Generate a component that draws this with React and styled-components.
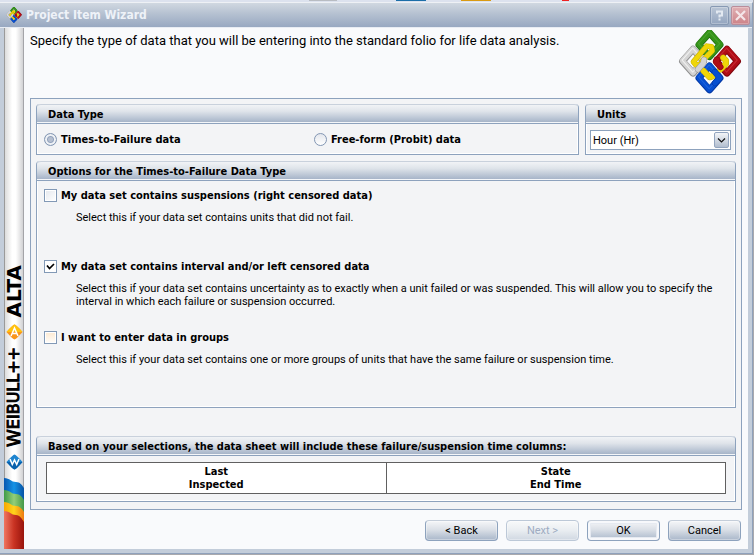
import React, { useState } from "react";
import styled, { createGlobalStyle, css } from "styled-components";

const line = "#8da2bd";
const boldFont = `"DejaVu Sans Condensed", "DejaVu Sans", sans-serif`;

const Global = createGlobalStyle`
  *, *::before, *::after { box-sizing: border-box; }
  body {
    margin: 0;
    background: #dfe6f0;
    color: #000;
    font-family: Roboto, "DejaVu Sans Condensed", sans-serif;
    font-size: 11px;
    line-height: 13px;
  }
  button, select, input { font: inherit; margin: 0; }
`;

const Desktop = styled.div`
  min-height: 100vh;
  display: flex;
  flex-direction: column;
  padding: 0 1px 1px 0;
  background: #a9a9ad;
`;

const Backdrop = styled.div`
  height: 2px;
  background:
    linear-gradient(#1c6ea8, #1c6ea8) 396px 0 / 30px 1px no-repeat,
    linear-gradient(#d99a12, #d99a12) 461px 0 / 30px 1px no-repeat,
    linear-gradient(#e22, #e22) 562px 0 / 7px 1px no-repeat,
    linear-gradient(#b8bcc2, #b8bcc2) 309px 0 / 28px 1px no-repeat,
    #dce2ee;
`;

const Dialog = styled.main`
  flex: 1;
  display: flex;
  flex-direction: column;
  background: #c3cdda;
  border-right: 1px solid #8fa1bb;
  border-bottom: 1px solid #8fa1bb;
  border-top: 1px solid #eef1f5;
`;

const TitleBar = styled.header`
  height: 24px;
  display: flex;
  align-items: center;
  gap: 4px;
  padding: 0 2px 0 6px;
  background: linear-gradient(#d0d8e1, #b5c1d1 45%, #98a8c1);
`;

const Title = styled.h1`
  flex: 1;
  margin: 0;
  color: #eef2f8;
  font-family: ${boldFont};
  font-size: 12px;
  line-height: 16px;
`;

const CaptionButton = styled.button`
  width: 19px;
  height: 19px;
  padding: 0;
  display: grid;
  place-items: center;
  border: 1px solid ${(p) => (p.$close ? "#b98d9b" : "#8799b3")};
  border-radius: 2px;
  background: ${(p) =>
    p.$close
      ? "linear-gradient(#e0b0b4, #cd8389)"
      : "linear-gradient(#b9c5d5, #95a6c0)"};
  box-shadow: inset 0 0 0 1px rgba(255, 255, 255, 0.25);
`;

const CaptionButtons = styled.div`
  display: flex;
  gap: 2px;
`;

const Body = styled.div`
  flex: 1;
  display: flex;
  border-top: 1px solid #e8ecf3;
  padding: 0 4px 4px 4px;
`;

const Sidebar = styled.aside`
  width: 20px;
  flex: none;
  display: flex;
  flex-direction: column;
  justify-content: flex-end;
  align-items: center;
  gap: 7px;
  border-left: 1px solid #9a9a9a;
  border-right: 1px solid #a4a4a8;
  background: linear-gradient(90deg, #dcdcdc, #fff 40%, #fff 60%, #d2d2d4);
`;

const Brand = styled.div`
  writing-mode: vertical-rl;
  transform: rotate(180deg);
  font-family: "DejaVu Sans", sans-serif;
  font-size: ${(p) => (p.$large ? "20px" : "18px")};
  font-weight: ${(p) => (p.$large ? "700" : "400")};
  font-kerning: none;
  line-height: 18px;
  -webkit-text-stroke: ${(p) => (p.$large ? "0" : "1px #000")};
  white-space: nowrap;

  span { font-size: 16px; }
`;

const Ribbon = styled.svg`
  display: block;
  width: 20px;
  height: 72px;
  flex: none;
`;

const Page = styled.div`
  flex: 1;
  min-width: 0;
  padding: 2px 6px 8px;
  background: #f9fafc;
`;

const Intro = styled.div`
  display: flex;
  justify-content: space-between;
  min-height: 68px;
`;

const IntroText = styled.p`
  margin: 0;
  padding-top: 3px;
  font-size: 13px;
  line-height: 16px;
`;

const Frame = styled.section`
  display: flex;
  flex-direction: column;
  gap: 6px;
  padding: 5px 5px 7px;
  border: 1px solid ${line};
  background: #f3f4f6;
`;

const TopRow = styled.div`
  display: flex;
  gap: 6px;
`;

const Group = styled.fieldset`
  min-width: 0;
  margin: 0;
  padding: 0;
  border: 1px solid ${line};
  border-top: 0;
  border-radius: 4px 4px 0 0;
  box-shadow: inset -1px -1px #fff, inset 1px 0 #fff;
  ${(p) => p.$grow && css`flex: 1;`}
  ${(p) => p.$narrow && css`flex: 0 0 151px;`}
  ${(p) => p.$spaced && css`margin-top: 22px;`}
`;

const GroupTitle = styled.h2`
  margin: 0;
  height: 20px;
  padding: 2px 11px 0;
  border-top: 1px solid #c9d1dc;
  border-bottom: 1px solid ${line};
  border-radius: 4px 4px 0 0;
  background: linear-gradient(#f1f3f6, #dfe4ea 35%, #a7b5c9 94%, #f4f6f9 95%);
  font-family: ${boldFont};
  font-size: 11px;
  line-height: 15px;
`;

const RadioRow = styled.div`
  display: grid;
  grid-template-columns: 1fr 1fr;
  gap: 6px;
  padding: 9px 0 7px 7px;
`;

const CheckLabel = styled.label`
  display: flex;
  align-items: center;
  gap: 4px;
  font-family: ${boldFont};
  font-weight: 700;
`;

const Radio = styled.input`
  appearance: none;
  width: 13px;
  height: 13px;
  border: 1px solid #8296b3;
  border-radius: 50%;
  background: linear-gradient(#e3e6ec, #fff);

  &:checked {
    background: radial-gradient(circle, #b5bfd0 0 2px, #93a3bd 3px, #eef1f5 4px 5px, #b6c1d1 6px);
  }
`;

const CheckInput = styled.input`
  appearance: none;
  width: 13px;
  height: 13px;
  border: 1px solid #8299b6;
  background: ${(p) =>
    p.$warm
      ? "linear-gradient(#fce9d2, #fffdf9)"
      : "linear-gradient(135deg, #e3e7ed, #fff)"};
  box-shadow: inset 0 0 0 1px #fff;

  &:checked {
    background: #fff
      url("data:image/svg+xml,%3Csvg xmlns='http://www.w3.org/2000/svg' viewBox='0 0 11 11'%3E%3Cpath d='M2 4.5 4.5 7.5 9 3' fill='none' stroke='%23000' stroke-width='1.7'/%3E%3C/svg%3E");
  }
`;

const Options = styled.div`
  padding: 8px 7px 12px;
`;

const Option = styled.div`
  min-height: 71px;

  &:last-child { min-height: 64px; }
`;

const OptionText = styled.p`
  margin: 9px 8px 0 32px;
`;

const UnitBox = styled.div`
  padding: 6px 4px 4px;
`;

const SelectWrap = styled.div`
  display: flex;
  align-items: center;
  height: 20px;
  padding-right: 1px;
  border: 1px solid ${line};
  background: #fff;
`;

const Select = styled.select`
  flex: 1;
  min-width: 0;
  height: 18px;
  appearance: none;
  border: 0;
  padding: 0 2px;
  background: transparent;
  color: #000;
`;

const DropArrow = styled.svg`
  width: 15px;
  height: 16px;
  flex: none;
  border: 1px solid #93a5bf;
  border-radius: 2px;
  background: linear-gradient(#f3f5f8, #b1bdce);
  pointer-events: none;
`;

const Columns = styled.table`
  width: calc(100% - 18px);
  margin: 6px 9px 7px;
  border-collapse: collapse;
  table-layout: fixed;
  background: #fff;

  th {
    height: 31px;
    padding: 0;
    border: 1px solid #606060;
    font-family: ${boldFont};
    font-size: 11px;
    line-height: 13px;
  }
`;

const Footer = styled.footer`
  display: flex;
  justify-content: flex-end;
  gap: 8px;
  padding: 10px 1px 0 0;
`;

const Button = styled.button`
  width: 73px;
  height: 21px;
  padding: 0;
  border: 1px solid ${line};
  border-top-color: #c4cdd9;
  border-radius: 4px;
  color: #000;
  background: linear-gradient(#f5f6f8, #dbe0e7 45%, #a9b7ca);
  box-shadow: inset 0 0 0 1px rgba(255, 255, 255, 0.35);

  ${(p) =>
    p.$primary &&
    css`box-shadow: inset 0 0 0 2px #f7f8fb, inset 0 0 0 3px #e6eaf1;`}

  &:disabled {
    color: #9eacc2;
    border-color: #bcc8d7;
    background: linear-gradient(#f8f9fa, #e9edf1 50%, #d0d8e2);
  }
`;

const diamond = (x, y) =>
  `M${x} ${y - 35} L${x + 31} ${y} L${x} ${y + 35} L${x - 31} ${y} Z`;

function Ring({ x, y, dark, main, light }) {
  return (
    <g fill="none" strokeLinejoin="round">
      <path d={diamond(x, y)} stroke={dark} strokeWidth="20" />
      <path d={diamond(x, y - 1)} stroke={main} strokeWidth="16" />
      <path d={diamond(x - 1, y - 3)} stroke={light} strokeWidth="3" />
    </g>
  );
}

function Link({ d, dark = "#c9b000", main = "#efd608", width = 16 }) {
  return (
    <g fill="none" strokeLinejoin="round" strokeLinecap="round">
      <path d={d} stroke={dark} strokeWidth={width + 2} />
      <path d={d} stroke={main} strokeWidth={width - 1} />
    </g>
  );
}

function ChainLogo({ size }) {
  return (
    <svg width={size} height={size} viewBox="354 91 187 187" aria-hidden="true">
      <Ring x={446} y={134} dark="#226f10" main="#359319" light="#4aa22d" />
      <Ring x={446} y={231} dark="#0237a3" main="#074fd0" light="#1c62dd" />
      <Ring x={398} y={182} dark="#8f8f8f" main="#d4d4d4" light="#f0f0f0" />
      <Ring x={497} y={182} dark="#7c050c" main="#b00d16" light="#c42a32" />
      <Link d="M416 192 L406 193 L399 184 L438 138 L452 140 L454 152 L424 182" width={14} />
      <Link d="M428 210 L446 229 L455 226" />
      <Link d="M478 206 L494 190 L494 180 L486 172" />
      <Link d="M430 178 L428 188 L412 206" dark="#9a9a9a" main="#d4d4d4" />
      <Link d="M467 178 L465 184 L478 199" dark="#8c0810" main="#b00d16" />
      <Link d="M462 214 L476 231 L462 246" dark="#0237a3" main="#074fd0" />
    </svg>
  );
}

function AltaMark() {
  return (
    <svg width="17" height="16" viewBox="0 0 17 16" aria-hidden="true">
      <path d="M8.5 0.5 Q10 0.5 16.5 8 Q10 15.5 8.5 15.5 Q7 15.5 0.5 8 Q7 0.5 8.5 0.5Z" fill="#f9951b" />
      <path d="M0.5 8H16.5Q10 0.5 8.5 0.5Q7 0.5 0.5 8Z" fill="#ffc20e" />
      <path d="M5 12 8.5 4 12 12M6.5 9.5H10.5" fill="none" stroke="#fff" strokeWidth="1.5" />
    </svg>
  );
}

function WeibullMark() {
  return (
    <svg width="17" height="16" viewBox="0 0 17 16" aria-hidden="true">
      <path d="M8.5 0.5 Q10 0.5 16.5 8 Q10 15.5 8.5 15.5 Q7 15.5 0.5 8 Q7 0.5 8.5 0.5Z" fill="#1d84cf" />
      <path d="M0.5 8 H16.5 Q10 15.5 8.5 15.5 Q7 15.5 0.5 8Z" fill="#0861ad" />
      <path d="M4 5 6.3 10.5 8.5 6 10.7 10.5 13 5" fill="none" stroke="#fff" strokeWidth="1.5" />
    </svg>
  );
}

function SideRibbon() {
  return (
    <Ribbon viewBox="0 0 20 72" preserveAspectRatio="none" aria-hidden="true">
      <defs>
        <linearGradient id="rb"><stop stopColor="#0656b0" /><stop offset=".5" stopColor="#1593e6" /><stop offset="1" stopColor="#0752a4" /></linearGradient>
        <linearGradient id="rg"><stop stopColor="#3f9b48" /><stop offset=".5" stopColor="#92ce78" /><stop offset="1" stopColor="#459848" /></linearGradient>
        <linearGradient id="ry"><stop stopColor="#f6a800" /><stop offset=".5" stopColor="#ffd31c" /><stop offset="1" stopColor="#ee7812" /></linearGradient>
        <linearGradient id="rr"><stop stopColor="#ef7560" /><stop offset=".5" stopColor="#c93323" /><stop offset="1" stopColor="#98140c" /></linearGradient>
      </defs>
      <path d="M0 1C6 1 7 5 12 5C16 5 18 8 20 11V72H0Z" fill="url(#rb)" />
      <path d="M0 13C6 13 7 17 12 17C16 17 18 20 20 23V72H0Z" fill="url(#rg)" />
      <path d="M0 25C6 25 7 29 12 29C16 29 18 32 20 35V72H0Z" fill="url(#ry)" />
      <path d="M0 34C6 34 7 38 12 38C16 38 18 42 20 45V72H0Z" fill="url(#rr)" />
    </Ribbon>
  );
}

function Panel({ title, children, ...rest }) {
  return (
    <Group aria-label={title} {...rest}>
      <GroupTitle>{title}</GroupTitle>
      {children}
    </Group>
  );
}

const optionList = [
  {
    id: "suspensions",
    label: "My data set contains suspensions (right censored data)",
    text: "Select this if your data set contains units that did not fail.",
  },
  {
    id: "interval",
    label: "My data set contains interval and/or left censored data",
    text: "Select this if your data set contains uncertainty as to exactly when a unit failed or was suspended. This will allow you to specify the interval in which each failure or suspension occurred.",
  },
  {
    id: "groups",
    label: "I want to enter data in groups",
    text: "Select this if your data set contains one or more groups of units that have the same failure or suspension time.",
    warm: true,
  },
];

export default function App() {
  const [type, setType] = useState("times");
  const [checked, setChecked] = useState({ interval: true });

  return (
    <Desktop>
      <Global />
      <Backdrop />
      <Dialog>
        <TitleBar>
          <ChainLogo size={16} />
          <Title>Project Item Wizard</Title>
          <CaptionButtons>
            <CaptionButton aria-label="Help">
              <svg width="9" height="11" viewBox="0 0 9 11">
                <path d="M1 2.5H2V1.5H7V5.5H4.5V7.5M4.5 8.5V10.5" fill="none" stroke="#e3e9f1" strokeWidth="2" />
              </svg>
            </CaptionButton>
            <CaptionButton $close aria-label="Close">
              <svg width="11" height="11" viewBox="0 0 11 11">
                <path d="M1 1 10 10M10 1 1 10" stroke="#f4e6e9" strokeWidth="2.2" />
              </svg>
            </CaptionButton>
          </CaptionButtons>
        </TitleBar>
        <Body>
          <Sidebar>
            <Brand $large>ALTA</Brand>
            <AltaMark />
            <Brand>W<span>EIBULL++</span></Brand>
            <WeibullMark />
            <SideRibbon />
          </Sidebar>
          <Page>
            <Intro>
              <IntroText>
                Specify the type of data that you will be entering into the standard folio for life data analysis.
              </IntroText>
              <ChainLogo size={64} />
            </Intro>
            <Frame>
              <TopRow>
                <Panel title="Data Type" $grow>
                  <RadioRow>
                    <CheckLabel>
                      <Radio type="radio" name="type" checked={type === "times"} onChange={() => setType("times")} />
                      Times-to-Failure data
                    </CheckLabel>
                    <CheckLabel>
                      <Radio type="radio" name="type" checked={type === "free"} onChange={() => setType("free")} />
                      Free-form (Probit) data
                    </CheckLabel>
                  </RadioRow>
                </Panel>
                <Panel title="Units" $narrow>
                  <UnitBox>
                    <SelectWrap>
                      <Select aria-label="Units" defaultValue="hr">
                        <option value="hr">Hour (Hr)</option>
                        <option value="day">Day (Day)</option>
                      </Select>
                      <DropArrow viewBox="0 0 13 14">
                        <path d="M3 5.5 6.5 9 10 5.5" fill="none" stroke="#111" strokeWidth="1.2" />
                      </DropArrow>
                    </SelectWrap>
                  </UnitBox>
                </Panel>
              </TopRow>
              <Panel title="Options for the Times-to-Failure Data Type">
                <Options>
                  {optionList.map((o) => (
                    <Option key={o.id}>
                      <CheckLabel>
                        <CheckInput
                          type="checkbox"
                          $warm={o.warm}
                          checked={!!checked[o.id]}
                          onChange={(e) => setChecked({ ...checked, [o.id]: e.target.checked })}
                        />
                        {o.label}
                      </CheckLabel>
                      <OptionText>{o.text}</OptionText>
                    </Option>
                  ))}
                </Options>
              </Panel>
              <Panel title="Based on your selections, the data sheet will include these failure/suspension time columns:" $spaced>
                <Columns>
                  <thead>
                    <tr>
                      <th scope="col">Last<br />Inspected</th>
                      <th scope="col">State<br />End Time</th>
                    </tr>
                  </thead>
                </Columns>
              </Panel>
            </Frame>
            <Footer>
              <Button type="button">&lt; Back</Button>
              <Button type="button" disabled>Next &gt;</Button>
              <Button type="button" $primary>OK</Button>
              <Button type="button">Cancel</Button>
            </Footer>
          </Page>
        </Body>
      </Dialog>
    </Desktop>
  );
}
